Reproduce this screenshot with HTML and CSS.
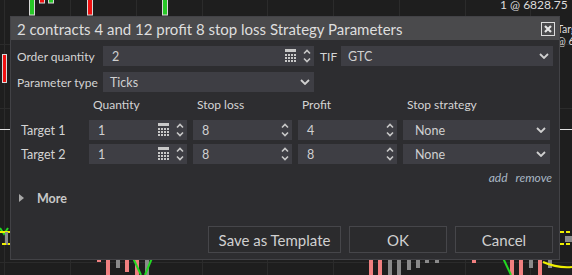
FILE: index.html
```html
<!DOCTYPE html>
<html lang="en">
<head>
  <meta charset="UTF-8">
  <meta name="viewport" content="width=device-width, initial-scale=1.0">
  <title>Strategy Parameters</title>
  <link rel="stylesheet" href="styles.css">
</head>
<body>

  <!-- chart behind the dialog -->
  <svg class="chart" width="572" height="275" viewBox="0 0 572 275">
    <g stroke="#2b2b2b" stroke-width="1">
      <line x1="4.5" y1="0" x2="4.5" y2="275"/>
      <line x1="70.5" y1="0" x2="70.5" y2="275"/>
      <line x1="136.5" y1="0" x2="136.5" y2="275"/>
      <line x1="202.5" y1="0" x2="202.5" y2="275"/>
      <line x1="267.5" y1="0" x2="267.5" y2="275"/>
      <line x1="333.5" y1="0" x2="333.5" y2="275"/>
      <line x1="399.5" y1="0" x2="399.5" y2="275"/>
      <line x1="465.5" y1="0" x2="465.5" y2="275"/>
      <line x1="530.5" y1="0" x2="530.5" y2="275"/>
      <line x1="0" y1="44.5" x2="572" y2="44.5"/>
      <line x1="0" y1="108.5" x2="572" y2="108.5"/>
      <line x1="0" y1="262.5" x2="572" y2="262.5"/>
    </g>
    <g stroke="#d8d8d8" stroke-width="1">
      <rect x="29.5" y="-1" width="5" height="16" fill="#27c827"/>
      <rect x="39.5" y="-1" width="5" height="4" fill="#f01010"/>
      <rect x="48.5" y="-1" width="5" height="4" fill="#27c827"/>
      <rect x="87.5" y="-1" width="5" height="16" fill="#f01010"/>
      <rect x="162.5" y="-1" width="5" height="16" fill="#27c827"/>
      <rect x="2.5" y="54.5" width="4" height="28" fill="#f01010"/>
    </g>
    <line x1="0" y1="129.5" x2="572" y2="129.5" stroke="#e0e0e0"/>
    <text x="500" y="9" class="chart-text">1 @ 6828.75</text>
    <text x="557" y="33" class="chart-text small">Target 2</text>
    <text x="557" y="45" class="chart-text small">@ 6828.75</text>

    <!-- left indicator -->
    <polyline points="0,228 4,234 8,228" fill="none" stroke="#22d822" stroke-width="2"/>
    <line x1="0" y1="232" x2="10" y2="232" stroke="#f0f000" stroke-width="2"/>
    <rect x="5" y="232" width="3" height="13" fill="#8a8a8a"/>
    <line x1="2" y1="244" x2="10" y2="244" stroke="#f0f000" stroke-width="2" stroke-dasharray="4 2"/>

    <!-- right indicator -->
    <line x1="560" y1="232" x2="572" y2="232" stroke="#f0f000" stroke-width="2" stroke-dasharray="4 2"/>
    <rect x="565" y="236" width="7" height="6" fill="#8a8a8a"/>
    <line x1="560" y1="244" x2="572" y2="244" stroke="#f0f000" stroke-width="2" stroke-dasharray="4 2"/>

    <!-- histogram -->
    <g fill="#f08080">
      <rect x="97" y="260" width="4" height="2"/>
      <rect x="106" y="260" width="4" height="15"/>
      <rect x="125" y="260" width="4" height="12"/>
      <rect x="135" y="260" width="4" height="15"/>
      <rect x="369" y="260" width="4" height="15"/>
      <rect x="378" y="260" width="4" height="15"/>
      <rect x="472" y="260" width="4" height="3"/>
      <rect x="510" y="260" width="4" height="15"/>
      <rect x="519" y="260" width="4" height="15"/>
      <rect x="538" y="260" width="4" height="15"/>
    </g>
    <g fill="#8a8a8a">
      <rect x="116" y="260" width="4" height="8"/>
      <rect x="145" y="260" width="4" height="15"/>
      <rect x="388" y="260" width="4" height="15"/>
      <rect x="397" y="260" width="4" height="15"/>
      <rect x="407" y="260" width="4" height="10"/>
      <rect x="416" y="260" width="4" height="8"/>
      <rect x="425" y="260" width="4" height="3"/>
      <rect x="435" y="260" width="4" height="3"/>
      <rect x="529" y="260" width="4" height="8"/>
      <rect x="548" y="260" width="4" height="8"/>
    </g>
    <g fill="none" stroke="#22d822" stroke-width="2">
      <line x1="133" y1="258" x2="141" y2="275"/>
      <line x1="145" y1="275" x2="152" y2="258"/>
      <line x1="503" y1="258" x2="511" y2="275"/>
    </g>
    <path d="M543 262 C552 266 560 268 572 267" fill="none" stroke="#f0f000" stroke-width="2"/>
  </svg>

  <svg width="0" height="0" class="defs">
    <defs>
      <symbol id="calc" viewBox="0 0 11 14">
        <rect x="0" y="0" width="11" height="3" fill="#c8c8c8"/>
        <g fill="#c8c8c8">
          <rect x="0" y="5" width="2" height="2"/><rect x="3" y="5" width="2" height="2"/><rect x="6" y="5" width="2" height="2"/><rect x="9" y="5" width="2" height="2"/>
          <rect x="0" y="8" width="2" height="2"/><rect x="3" y="8" width="2" height="2"/><rect x="6" y="8" width="2" height="2"/><rect x="9" y="8" width="2" height="2"/>
          <rect x="0" y="11" width="2" height="2"/><rect x="3" y="11" width="2" height="2"/><rect x="6" y="11" width="2" height="2"/><rect x="9" y="11" width="2" height="2"/>
        </g>
      </symbol>
      <symbol id="spin" viewBox="0 0 8 14">
        <polyline points="1,4.5 4,1.5 7,4.5" fill="none" stroke="#c8c8c8" stroke-width="1.6"/>
        <polyline points="1,9.5 4,12.5 7,9.5" fill="none" stroke="#c8c8c8" stroke-width="1.6"/>
      </symbol>
      <symbol id="chev" viewBox="0 0 10 6">
        <polyline points="1,1 5,5 9,1" fill="none" stroke="#d0d0d0" stroke-width="1.8"/>
      </symbol>
    </defs>
  </svg>

  <div class="dialog">
    <div class="title-bar">
      <span class="title">2 contracts 4 and 12 profit 8 stop loss Strategy Parameters</span>
      <span class="close">
        <svg width="8" height="8" viewBox="0 0 8 8"><path d="M1 1L7 7M7 1L1 7" stroke="#e6e6e6" stroke-width="2.2"/></svg>
      </span>
    </div>

    <div class="content">
      <div class="row">
        <span class="label">Order quantity</span>
        <div class="field wide">
          <span class="value num">2</span>
          <svg class="calc"><use href="#calc"/></svg>
          <svg class="spin"><use href="#spin"/></svg>
        </div>
        <span class="label tif">TIF</span>
        <div class="field grow">
          <span class="value">GTC</span>
          <svg class="chev"><use href="#chev"/></svg>
        </div>
      </div>

      <div class="row second">
        <span class="label">Parameter type</span>
        <div class="field wide">
          <span class="value">Ticks</span>
          <svg class="chev"><use href="#chev"/></svg>
        </div>
      </div>

      <div class="targets">
        <span></span>
        <span class="col-head">Quantity</span>
        <span class="col-head">Stop loss</span>
        <span class="col-head">Profit</span>
        <span class="col-head">Stop strategy</span>

        <span class="target-label">Target 1</span>
        <div class="field">
          <span class="value num">1</span>
          <svg class="calc"><use href="#calc"/></svg>
          <svg class="spin"><use href="#spin"/></svg>
        </div>
        <div class="field">
          <span class="value num">8</span>
          <svg class="spin"><use href="#spin"/></svg>
        </div>
        <div class="field">
          <span class="value num">4</span>
          <svg class="spin"><use href="#spin"/></svg>
        </div>
        <div class="field">
          <span class="value strat">None</span>
          <svg class="chev"><use href="#chev"/></svg>
        </div>

        <span class="target-label">Target 2</span>
        <div class="field">
          <span class="value num">1</span>
          <svg class="calc"><use href="#calc"/></svg>
          <svg class="spin"><use href="#spin"/></svg>
        </div>
        <div class="field">
          <span class="value num">8</span>
          <svg class="spin"><use href="#spin"/></svg>
        </div>
        <div class="field">
          <span class="value num">8</span>
          <svg class="spin"><use href="#spin"/></svg>
        </div>
        <div class="field">
          <span class="value strat">None</span>
          <svg class="chev"><use href="#chev"/></svg>
        </div>
      </div>

      <div class="links">
        <a>add</a>
        <a>remove</a>
      </div>

      <div class="more">
        <span class="arrow"></span>
        <span>More</span>
      </div>

      <div class="buttons">
        <button class="btn template">Save as Template</button>
        <button class="btn">OK</button>
        <button class="btn">Cancel</button>
      </div>
    </div>
  </div>

</body>
</html>
```

FILE: styles.css
```css
body {
  margin: 0;
  width: 572px;
  height: 275px;
  overflow: hidden;
  background-color: #1e1e1e;
  font-family: Lato, "Liberation Sans", sans-serif;
  color: #d4d4d4;
}
.chart {
  position: absolute;
  left: 0;
  top: 0;
}
.chart-text {
  font-family: Lato, "Liberation Sans", sans-serif;
  font-size: 12px;
  fill: #dcdcdc;
}
.chart-text.small {
  font-size: 10.5px;
}
.defs {
  position: absolute;
}
.dialog {
  position: relative;
  margin: 16px 0 0 10px;
  width: 550px;
  height: 244px;
  box-sizing: border-box;
  border: 1px solid #424246;
  background-color: #2d2d30;
  display: flex;
  flex-direction: column;
  white-space: nowrap;
}
.title-bar {
  height: 23px;
  background-color: #4a4a4c;
  display: flex;
  align-items: center;
  justify-content: space-between;
  padding: 0 4px 0 6px;
}
.title {
  font-size: 15px;
  color: #dedede;
}
.close {
  width: 14px;
  height: 14px;
  box-sizing: border-box;
  border: 1px solid #dcdcdc;
  display: flex;
  align-items: center;
  justify-content: center;
}
.content {
  flex: 1;
  display: flex;
  flex-direction: column;
  padding: 6px 6px 6px 6px;
}
.row {
  display: flex;
  align-items: center;
  height: 20px;
}
.row.second {
  margin-top: 6px;
}
.label {
  width: 86px;
  font-size: 12px;
}
.label.tif {
  width: 21px;
  margin-left: 6px;
}
.field {
  height: 20px;
  background-color: #3e3e44;
  display: flex;
  align-items: center;
  padding-right: 3px;
  font-size: 12.5px;
  color: #d0d0d0;
}
.field.wide {
  width: 211px;
  box-sizing: border-box;
}
.field.grow {
  flex: 1;
}
.value {
  flex: 1;
  padding-left: 7px;
}
.value.num {
  padding-left: 9px;
}
.value.strat {
  padding-left: 12px;
}
.calc {
  width: 11px;
  height: 14px;
  margin-right: 7px;
}
.spin {
  width: 8px;
  height: 14px;
}
.chev {
  width: 10px;
  height: 6px;
  margin-right: 1px;
}
.targets {
  display: grid;
  grid-template-columns: 62px 98px 99px 99px 147px;
  grid-template-rows: 19px 20px 20px;
  column-gap: 6px;
  row-gap: 4px;
  margin-top: 5px;
  padding-left: 4px;
}
.col-head {
  font-size: 12px;
  line-height: 16px;
  padding-left: 4px;
}
.target-label {
  font-size: 12.5px;
  display: flex;
  align-items: center;
}
.links {
  margin-top: 7px;
  height: 14px;
  display: flex;
  justify-content: flex-end;
  gap: 8px;
  padding-right: 1px;
  font-size: 12px;
  font-style: italic;
  color: #aab8c6;
  line-height: 14px;
}
.more {
  margin-top: 6px;
  height: 14px;
  display: flex;
  align-items: center;
  gap: 13px;
  padding-left: 2px;
  font-size: 12.5px;
  font-weight: bold;
  color: #c8c8c8;
}
.more .arrow {
  width: 0;
  height: 0;
  border-top: 4px solid transparent;
  border-bottom: 4px solid transparent;
  border-left: 5px solid #a8a8a8;
}
.buttons {
  margin-top: auto;
  display: flex;
  justify-content: flex-end;
  gap: 8px;
}
.btn {
  width: 98px;
  height: 27px;
  background-color: #2b2b2d;
  border: 1px solid #46464a;
  color: #d0d0d0;
  font-family: Lato, "Liberation Sans", sans-serif;
  font-size: 15px;
  padding: 0;
}
.btn.template {
  width: 133px;
}
```
